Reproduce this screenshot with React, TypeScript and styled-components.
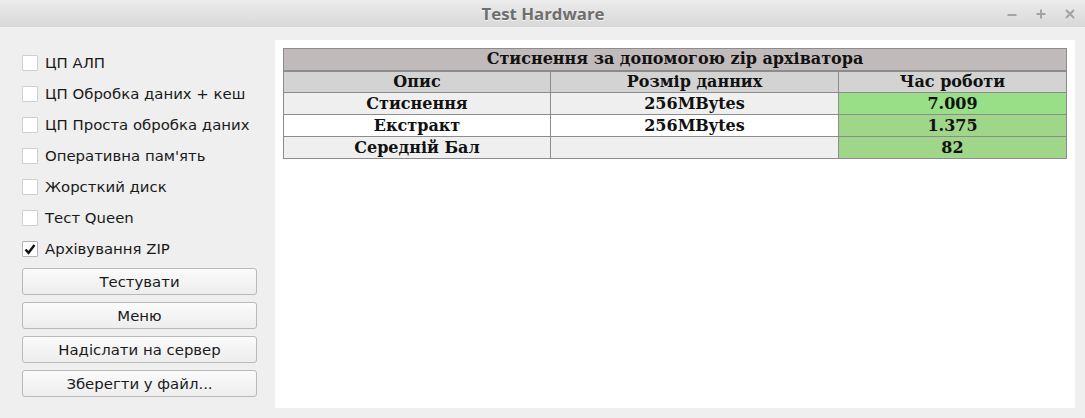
import React, { useState } from 'react'
import styled, { createGlobalStyle } from 'styled-components'

const GlobalStyle = createGlobalStyle`
  html, body {
    margin: 0;
    padding: 0;
    background: #efefef;
  }
  * {
    box-sizing: border-box;
  }
`

const Window = styled.div`
  width: 1085px;
  height: 418px;
  display: flex;
  flex-direction: column;
  background: #efefef;
  font-family: 'DejaVu Sans', 'Liberation Sans', sans-serif;
  overflow: hidden;
`

const TitleBar = styled.div`
  height: 27px;
  flex: none;
  display: flex;
  align-items: center;
  justify-content: center;
  position: relative;
  background: linear-gradient(#ececec, #d8d8d8);
`

const Title = styled.div`
  font-family: 'Open Sans', 'Noto Sans', sans-serif;
  font-weight: 700;
  font-size: 16.8px;
  color: #6e6e6e;
  text-shadow: 0 1px 0 rgba(255, 255, 255, 0.7);
  margin-left: 1px;
`

const Controls = styled.div`
  position: absolute;
  right: 10px;
  top: 0;
  height: 27px;
  display: flex;
  align-items: center;
  gap: 19px;
`

const ControlIcon = styled.svg`
  width: 10px;
  height: 10px;
  display: block;
`

const Body = styled.div`
  flex: 1;
  display: flex;
  gap: 18px;
  padding: 13px 10px 10px 22px;
`

const Sidebar = styled.div`
  width: 235px;
  flex: none;
  display: flex;
  flex-direction: column;
  padding-top: 7px;
`

const CheckRow = styled.label`
  height: 31px;
  display: flex;
  align-items: center;
  gap: 7px;
  font-size: 14.9px;
  color: #1a1a1a;
  cursor: default;
`

const Box = styled.span<{ $checked: boolean }>`
  width: 16px;
  height: 16px;
  flex: none;
  background: #ffffff;
  border: 1px solid ${({ $checked }) => ($checked ? '#b4b4b4' : '#cfcfcf')};
  border-radius: 1px;
  display: flex;
  align-items: center;
  justify-content: center;
`

const Buttons = styled.div`
  display: flex;
  flex-direction: column;
  gap: 7px;
  margin-top: 4px;
`

const Button = styled.button`
  height: 27px;
  width: 100%;
  border: 1px solid #b9b9b9;
  border-radius: 3px;
  background: linear-gradient(#fbfbfb, #ededed);
  font-family: 'DejaVu Sans', 'Liberation Sans', sans-serif;
  font-size: 14.9px;
  color: #1a1a1a;
  padding: 0;
`

const Panel = styled.div`
  flex: 1;
  background: #ffffff;
  padding: 8px;
`

const Table = styled.table`
  width: 100%;
  border-collapse: collapse;
  font-family: 'DejaVu Serif', 'Liberation Serif', serif;
  font-weight: 700;
  font-size: 16px;
  color: #111;
  border: 1px solid #8c8c8c;
`

const Cell = styled.td<{ $bg: string }>`
  height: 22px;
  padding: 0;
  text-align: center;
  border: 1px solid #8c8c8c;
  background: ${({ $bg }) => $bg};
  line-height: 20px;
`

const TitleCell = styled(Cell)`
  border-bottom: 2px solid #8c8c8c;
`

const options = [
  'ЦП АЛП',
  'ЦП Обробка даних + кеш',
  'ЦП Проста обробка даних',
  'Оперативна пам\'ять',
  'Жорсткий диск',
  'Тест Queen',
  'Архівування ZIP',
]

const rows = [
  { name: 'Стиснення', size: '256MBytes', time: '7.009', bg: '#efefef', green: '#98df88' },
  { name: 'Екстракт', size: '256MBytes', time: '1.375', bg: '#ffffff', green: '#a0d68a' },
  { name: 'Середній Бал', size: '', time: '82', bg: '#efefef', green: '#a0d68a' },
]

const Check = () => (
  <svg width="12" height="12" viewBox="0 0 12 12">
    <path d="M1.5 6.5 L4.5 9.8 L10.5 2" fill="none" stroke="#111" strokeWidth="2.4" strokeLinejoin="miter" />
  </svg>
)

export default function App() {
  const [checked, setChecked] = useState<boolean[]>(options.map((o, i) => i === 6))

  const toggle = (i: number) => {
    setChecked(checked.map((c, j) => (j === i ? !c : c)))
  }

  return (
    <Window>
      <GlobalStyle />
      <TitleBar>
        <Title>Test Hardware</Title>
        <Controls>
          <ControlIcon viewBox="0 0 10 10">
            <path d="M0.5 6 H9.5" stroke="#a3a3a3" strokeWidth="2" />
          </ControlIcon>
          <ControlIcon viewBox="0 0 10 10">
            <path d="M0.5 5 H9.5 M5 0.5 V9.5" stroke="#a3a3a3" strokeWidth="2" />
          </ControlIcon>
          <ControlIcon viewBox="0 0 10 10">
            <path d="M1 1 L9 9 M9 1 L1 9" stroke="#a3a3a3" strokeWidth="2" />
          </ControlIcon>
        </Controls>
      </TitleBar>
      <Body>
        <Sidebar>
          {options.map((label, i) => (
            <CheckRow key={label} onClick={() => toggle(i)}>
              <Box $checked={checked[i]}>{checked[i] && <Check />}</Box>
              {label}
            </CheckRow>
          ))}
          <Buttons>
            <Button>Тестувати</Button>
            <Button>Меню</Button>
            <Button>Надіслати на сервер</Button>
            <Button>Зберегти у файл...</Button>
          </Buttons>
        </Sidebar>
        <Panel>
          <Table>
            <colgroup>
              <col style={{ width: 267 }} />
              <col style={{ width: 288 }} />
              <col />
            </colgroup>
            <tbody>
              <tr>
                <TitleCell $bg="#c1baba" colSpan={3}>
                  Стиснення за допомогою zip архіватора
                </TitleCell>
              </tr>
              <tr>
                <Cell $bg="#d3d3d3">Опис</Cell>
                <Cell $bg="#d3d3d3">Розмір данних</Cell>
                <Cell $bg="#d3d3d3">Час роботи</Cell>
              </tr>
              {rows.map((r) => (
                <tr key={r.name}>
                  <Cell $bg={r.bg}>{r.name}</Cell>
                  <Cell $bg={r.bg}>{r.size}</Cell>
                  <Cell $bg={r.green}>{r.time}</Cell>
                </tr>
              ))}
            </tbody>
          </Table>
        </Panel>
      </Body>
    </Window>
  )
}
